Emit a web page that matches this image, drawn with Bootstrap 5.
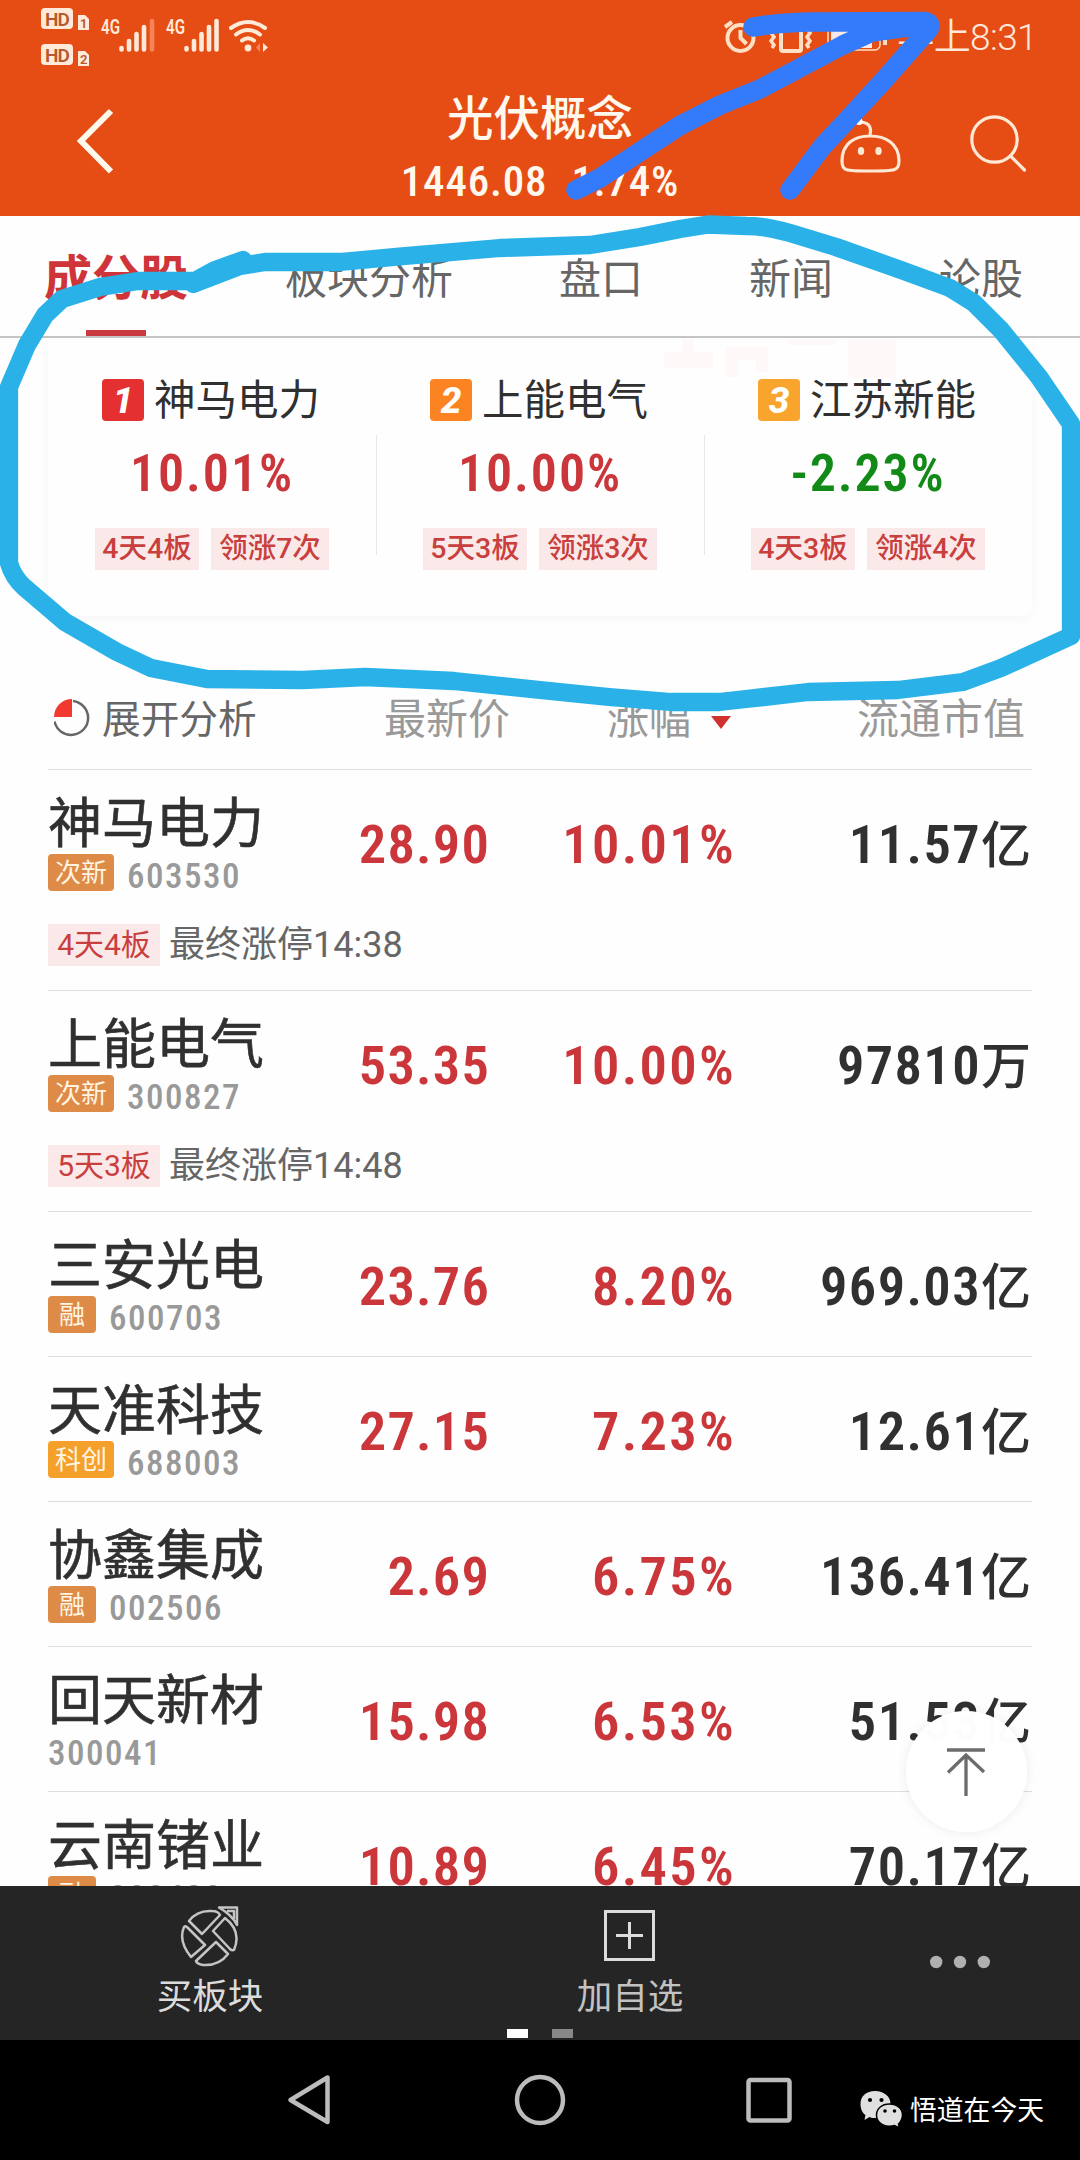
<!DOCTYPE html>
<html lang="zh-CN">
<head>
<meta charset="utf-8">
<meta name="viewport" content="width=1080">
<title>光伏概念</title>
<link href="https://cdn.jsdelivr.net/npm/bootstrap@5.3.0/dist/css/bootstrap.min.css" rel="stylesheet">
<style>
  body { width: 1080px; height: 2160px; overflow: hidden; background: #fefefe; color: #303030;
    font-family: Roboto, "Noto Sans CJK SC", sans-serif; line-height: 1; }
  svg { display: block; flex: none; }
  .screen { width: 1080px; height: 2160px; overflow: hidden; }
  .app-head { height: 216px; background: #e64d14; color: #fff8ee; }
  .status { height: 66px; padding: 0 43px 0 41px; }
  .clock { font-size: 37px; font-weight: 350; color: #ffe9dc; letter-spacing: -.6px; padding-top: 19px; }
  .title-bar { height: 150px; padding: 0 52px 0 74px; }
  .title-mid { font-size: 46.5px; font-weight: 500; padding-top: 30px; }
  .num { font-stretch: 83%; font-weight: 560; letter-spacing: 1.9px; }
  .index-line { font-size: 43px; margin-top: 17px; font-weight: 500; letter-spacing: .8px; }
  .tabs { height: 122px; border-bottom: 2px solid #c4c4c4; color: #666; font-size: 42px; padding: 0 0 0 44px; gap: 106px; }
  .tabs > div { padding-top: 43px; }
  .tabs .on { color: #cf3438; font-weight: 700; font-size: 48px; padding-top: 39px; margin-right: -9px; position: relative; }
  .tabs .on::after { content: ""; position: absolute; left: 42px; bottom: 0; width: 60px; height: 6px; background: #c83a40; }
  .leaders { margin: 0 48px; height: 278px; border-radius: 0 0 10px 10px; box-shadow: 0 3px 12px rgba(0,0,0,.035); clip-path: inset(0 -20px -20px -20px); }
  .leader { width: 328px; padding-top: 41px; position: relative; }
  .leader + .leader::before { content: ""; position: absolute; left: 0; top: 97px; width: 1px; height: 120px; background: #e8e8e8; }
  .rank { width: 42px; height: 42px; border-radius: 4px; color: #fff; font-weight: 800; font-style: italic; font-size: 37px; }
  .r1 { background: #e53031; } .r2 { background: #fb8321; } .r3 { background: #f8a42d; }
  .leader-name { font-size: 41.5px; padding-top: 2px; }
  .leader-head { gap: 10px; height: 42px; margin-left: -2px; }
  .leader-pct { font-size: 52px; margin-top: 27px; height: 52px; }
  .tags { gap: 12px; margin-top: 28px; }
  .tags .pill { justify-content: center; width: 104px; }
  .tags .pill + .pill { width: 118px; }
  .up { color: #cb363a; } .down { color: #128a17; }
  .pill { height: 42px; background: #fbe9ea; color: #c93f3d; font-size: 28.5px; font-weight: 500; white-space: nowrap; }
  .cols { display: grid; grid-template-columns: 212px 229px 243px 300px; margin: 0 48px; }
  .list-area { height: 1270px; flex: none; overflow: hidden; }
  .list-head { height: 154px; color: #999; font-size: 42px; padding-top: 83px; border-bottom: 1px solid #dedede; }
  .list-head .expand { color: #666; font-size: 38.7px; padding-left: 6px; white-space: nowrap; }
  .expand span { padding-top: 2px; }
  .h-price { margin-right: -21px; }
  .h-rise { gap: 20px; height: 42px; padding-right: 1px; }
  .h-cap { padding-right: 7px; }
  .sort { width: 0; height: 0; border: 10px solid transparent; border-top: 13px solid #d0332f; border-bottom: 0; margin-top: 5px; }
  .stock { height: 145px; border-bottom: 1px solid #dedede; margin: 0 48px; }
  .stock.tall { height: 221px; }
  .stock .cols { margin: 0; }
  .stock-name { font-size: 54px; padding-top: 28px; height: 84px; white-space: nowrap; -webkit-text-stroke: .6px #303030; }
  .mk { height: 37px; padding: 0 7px; background: #de8b48; color: #fff5e2; font-size: 26px; border-radius: 4px; }
  .mk.kc { background: #f5a02a; }
  .mk.one { padding: 0 11px; }
  .code { font-size: 35px; color: #999; font-weight: 500; font-stretch: 85%; letter-spacing: 1.5px; margin-left: 13px; padding-top: 5px; height: 37px; }
  .fig { font-size: 54.5px; padding-top: 47px; text-align: right; white-space: nowrap; margin-right: -1px; letter-spacing: 1.2px; }
  .fig + .fig { margin-right: -4px; letter-spacing: 2.3px; }
  .fig.cap { margin-right: 1px; letter-spacing: 1.4px; }
  .fig .unit { font-size: 50px; font-weight: 500; letter-spacing: 0; }
  .limit { height: 42px; margin-top: 33px; color: #666; font-size: 36px; }
  .limit .pill { width: 112px; font-size: 30px; font-weight: 400; }
  .limit-txt { margin-left: 9px; font-weight: 400; }
  .toolbar-dark { height: 154px; background: #252525; color: #c2c2c2; font-size: 35.5px; position: relative; }
  .tool { width: 420px; padding-top: 19px; gap: 13px; }
  .tool.buy { color: #dcdcdc; }
  .tool.more { width: 240px; padding: 66px 0 0 90px; }
  .dash { position: absolute; top: 143px; left: 507px; width: 21px; height: 9px; }
  .dash.off { left: 552px; background: #888; }
  .sysnav { height: 120px; background: #000; }
  .account { color: #fff; font-size: 26.8px; margin-left: 60px; }
  .account span { margin: 58px 0 0 6px; white-space: nowrap; }
  .over { position: absolute; left: 0; top: 0; pointer-events: none; }
  .to-top { position: absolute; left: 906px; top: 1711px; width: 121px; height: 121px; border-radius: 50%; background: rgba(255,255,255,.99); box-shadow: 0 0 12px rgba(0,0,0,.08); }
</style>
</head>
<body>
<div class="screen position-relative d-flex flex-column">
  <header class="app-head">
    <div class="status d-flex justify-content-between align-items-start">
      <svg width="230" height="66" viewBox="41 0 230 66" font-family="Roboto, sans-serif">
        <g fill="#ffe9d8">
          <rect x="41" y="8" width="32" height="21" rx="4"/><rect x="41" y="44" width="32" height="21" rx="4"/>
          <path d="M78 15h7l4 4v11H78zM78 51h7l4 4v11H78z"/>
          <text x="101" y="34" font-size="20" font-weight="600" textLength="19" lengthAdjust="spacingAndGlyphs">4G</text>
          <text x="166" y="34" font-size="20" font-weight="600" textLength="19" lengthAdjust="spacingAndGlyphs">4G</text>
        </g>
        <g fill="#b5582f" font-weight="600">
          <text x="45" y="25.500" font-size="19" textLength="25">HD</text><text x="45" y="61.500" font-size="19" textLength="25">HD</text>
          <text x="80" y="28" font-size="13">1</text><text x="80" y="64" font-size="13">2</text>
        </g>
        <g stroke="#ffe9d8" stroke-width="4.600" stroke-linecap="round">
          <path d="M121.500 48v1.500M129 41v8.500M136.500 34v15.500M144 27v22.500M186.500 48v1.500M194 41v8.500M201.500 34v15.500M209 27v22.500M216.500 21v28.500"/>
          <path d="M152 21v28.500" stroke="#f6825a"/>
        </g>
        <g fill="none" stroke="#ffe9d8" stroke-width="4" stroke-linecap="round">
          <path d="M231 28q17-12 34 0M236 34.500q12-9 24 0M242 40.500q6-4.500 12 0"/>
        </g>
        <circle cx="248" cy="48" r="3.400" fill="#ffe9d8"/><path d="M263 43v9l5-4.500z" fill="#ffe9d8"/><path d="M260 43v9l-4-4.500z" fill="#f6825a"/>
      </svg>
      <div class="d-flex">
        <svg width="174" height="66" viewBox="722 0 174 66" fill="none" stroke="#ffe0c4" stroke-width="4">
          <circle cx="739.500" cy="38" r="13"/><path d="M739.500 30v8l6 6M724 27l7-5M748 22l7 5"/>
          <rect x="780" y="22" width="20" height="29" rx="2"/>
          <path d="M773 29l-3 4 3 4-3 4 3 4-2 3M806 29l3 4-3 4 3 4-3 4 2 3" stroke-width="3.500"/>
          <rect x="827" y="20" width="52" height="30" rx="5" stroke-width="1.500"/><path d="M884 32v13"/>
          <rect x="830" y="22" width="41" height="26" fill="#fbe9e8" stroke="none"/>
        </svg>
        <span class="clock">早上8:31</span>
      </div>
    </div>
    <div class="title-bar d-flex justify-content-between align-items-start position-relative">
      <svg width="44" height="150" viewBox="74 66 44 150" fill="none" stroke="#fff8ec" stroke-width="6"><path d="M111 111L81 141l30 30.500"/></svg>
      <div class="title-mid text-center position-absolute start-0 w-100">
        <div>光伏概念</div>
        <div class="num index-line"><span>1446.08</span><span class="ms-4">1.74%</span></div>
      </div>
      <svg width="190" height="150" viewBox="838 66 190 150" fill="none" stroke="#ffe9d5" stroke-width="3.200" stroke-linecap="round">
        <path d="M870 136c15 0 29 7 29 25 0 10-4 10-29 10s-28 0-28-10c0-18 13-25 28-25zM870 135c2-9-2-13-11-13"/>
        <ellipse cx="861" cy="151" rx="3.200" ry="4" fill="#ffe9d5" stroke="none"/><ellipse cx="878.500" cy="151" rx="3.200" ry="4" fill="#ffe9d5" stroke="none"/><circle cx="859" cy="121.500" r="3.600" fill="#fff" stroke="none"/>
        <circle cx="994.500" cy="139.500" r="22.700"/><path d="M1010.500 156l14 14"/>
      </svg>
    </div>
  </header>

  <nav class="tabs d-flex">
    <div class="on">成分股</div><div>板块分析</div><div>盘口</div><div>新闻</div><div>论股</div>
  </nav>

  <section class="leaders d-flex">
    <div class="leader d-flex flex-column align-items-center">
      <div class="leader-head d-flex align-items-center"><span class="rank r1 d-flex align-items-center justify-content-center">1</span><span class="leader-name">神马电力</span></div>
      <div class="leader-pct num up">10.01%</div>
      <div class="tags d-flex"><span class="pill d-flex align-items-center">4天4板</span><span class="pill d-flex align-items-center">领涨7次</span></div>
    </div>
    <div class="leader d-flex flex-column align-items-center">
      <div class="leader-head d-flex align-items-center"><span class="rank r2 d-flex align-items-center justify-content-center">2</span><span class="leader-name">上能电气</span></div>
      <div class="leader-pct num up">10.00%</div>
      <div class="tags d-flex"><span class="pill d-flex align-items-center">5天3板</span><span class="pill d-flex align-items-center">领涨3次</span></div>
    </div>
    <div class="leader d-flex flex-column align-items-center">
      <div class="leader-head d-flex align-items-center"><span class="rank r3 d-flex align-items-center justify-content-center">3</span><span class="leader-name">江苏新能</span></div>
      <div class="leader-pct num down">-2.23%</div>
      <div class="tags d-flex"><span class="pill d-flex align-items-center">4天3板</span><span class="pill d-flex align-items-center">领涨4次</span></div>
    </div>
  </section>

  <section class="list-area">
    <div class="cols list-head">
      <div class="expand d-flex"><svg class="me-2" width="40" height="40" viewBox="0 0 40 40"><path d="M20 1.500A17 17 0 1 1 1.500 22" fill="none" stroke="#666" stroke-width="2.500" transform="translate(-1 .5)"/><path d="M18 18V0A18 18 0 0 0 0 18z" fill="#f2392f"/></svg><span>展开分析</span></div>
      <div class="text-end"><span class="h-price">最新价</span></div>
      <div class="d-flex justify-content-end align-items-center h-rise"><span>涨幅</span><i class="sort"></i></div>
      <div class="text-end h-cap">流通市值</div>
    </div>
    <div class="stock tall">
      <div class="cols">
        <div><div class="stock-name">神马电力</div><div class="d-flex align-items-center"><span class="mk d-flex align-items-center">次新</span><span class="code">603530</span></div></div>
        <div class="fig num up">28.90</div><div class="fig num up">10.01%</div><div class="fig num cap">11.57<span class="unit">亿</span></div>
      </div>
      <div class="limit d-flex align-items-center"><span class="pill d-flex align-items-center justify-content-center">4天4板</span><span class="limit-txt">最终涨停14:38</span></div>
    </div>
    <div class="stock tall">
      <div class="cols">
        <div><div class="stock-name">上能电气</div><div class="d-flex align-items-center"><span class="mk d-flex align-items-center">次新</span><span class="code">300827</span></div></div>
        <div class="fig num up">53.35</div><div class="fig num up">10.00%</div><div class="fig num cap">97810<span class="unit">万</span></div>
      </div>
      <div class="limit d-flex align-items-center"><span class="pill d-flex align-items-center justify-content-center">5天3板</span><span class="limit-txt">最终涨停14:48</span></div>
    </div>
    <div class="stock">
      <div class="cols">
        <div><div class="stock-name">三安光电</div><div class="d-flex align-items-center"><span class="mk one d-flex align-items-center">融</span><span class="code">600703</span></div></div>
        <div class="fig num up">23.76</div><div class="fig num up">8.20%</div><div class="fig num cap">969.03<span class="unit">亿</span></div>
      </div>
    </div>
    <div class="stock">
      <div class="cols">
        <div><div class="stock-name">天准科技</div><div class="d-flex align-items-center"><span class="mk kc d-flex align-items-center">科创</span><span class="code">688003</span></div></div>
        <div class="fig num up">27.15</div><div class="fig num up">7.23%</div><div class="fig num cap">12.61<span class="unit">亿</span></div>
      </div>
    </div>
    <div class="stock">
      <div class="cols">
        <div><div class="stock-name">协鑫集成</div><div class="d-flex align-items-center"><span class="mk one d-flex align-items-center">融</span><span class="code">002506</span></div></div>
        <div class="fig num up">2.69</div><div class="fig num up">6.75%</div><div class="fig num cap">136.41<span class="unit">亿</span></div>
      </div>
    </div>
    <div class="stock">
      <div class="cols">
        <div><div class="stock-name">回天新材</div><div class="d-flex align-items-center"><span class="code m-0">300041</span></div></div>
        <div class="fig num up">15.98</div><div class="fig num up">6.53%</div><div class="fig num cap">51.53<span class="unit">亿</span></div>
      </div>
    </div>
    <div class="stock">
      <div class="cols">
        <div><div class="stock-name">云南锗业</div><div class="d-flex align-items-center"><span class="mk one d-flex align-items-center">融</span><span class="code">002428</span></div></div>
        <div class="fig num up">10.89</div><div class="fig num up">6.45%</div><div class="fig num cap">70.17<span class="unit">亿</span></div>
      </div>
    </div>
  </section>

  <nav class="toolbar-dark d-flex">
    <div class="tool buy d-flex flex-column align-items-center">
      <svg width="60" height="62" viewBox="180 1905 60 62" fill="none" stroke="#c4c4c4" stroke-width="2.500" stroke-linejoin="round">
        <path d="M189 1925Q197 1914 212 1915Q218 1915 220 1919L202 1938ZM225 1922Q242 1935 234 1954Q232 1955 230 1953L213 1935ZM228 1958Q219 1970 203 1969Q197 1968 196 1965L216 1946ZM191 1961Q178 1945 184 1931Q185 1929 188 1932L205 1949Z" transform="translate(0 -4)"/>
        <path d="M219 1907.500H237V1925Q232 1915 219 1907.500ZM227 1911H234V1919"/>
      </svg>
      <span>买板块</span>
    </div>
    <div class="tool d-flex flex-column align-items-center">
      <svg width="60" height="62" viewBox="600 1905 60 62" fill="none" stroke="#dcdcdc" stroke-width="3"><path d="M605.500 1911.500h48v48h-48zM616 1935.500h27M629.500 1922v27"/></svg>
      <span>加自选</span>
    </div>
    <div class="tool more"><svg width="60" height="20" viewBox="930 1952 60 20" fill="#b0b0b0"><circle cx="936.200" cy="1962" r="6.200"/><circle cx="960" cy="1962" r="6.200"/><circle cx="983.800" cy="1962" r="6.200"/></svg></div>
    <i class="dash bg-white"></i><i class="dash off"></i>
  </nav>

  <footer class="sysnav d-flex">
    <svg width="800" height="120" viewBox="0 2040 800 120" fill="none" stroke="#bcbcbc" stroke-width="4.500" stroke-linejoin="round"><path d="M290.500 2100L327.500 2077.500V2122z"/><circle cx="540" cy="2100" r="23"/><rect x="748.500" y="2080" width="41" height="40.500" rx="2"/></svg>
    <div class="account d-flex align-items-start">
      <svg width="44" height="120" viewBox="860 2040 44 120"><path d="M875 2091c9 0 15.500 5.500 15.500 13 0 8-7 14-15.500 14-2 0-4 0-5.500-1l-5 3 1-5c-3-2-5-6-5-11 0-8 6-13 14.500-13z" fill="#e0e0e0"/><path d="M889.500 2104c8 0 13 5 13 11 0 4-2 7-4 9l1 4-5-2.500c-8 2-18-1-18-10.500 0-6 5-11 13-11z" fill="#e0e0e0" stroke="#000" stroke-width="1.500"/><g fill="#000"><circle cx="870" cy="2100" r="2.100"/><circle cx="881.500" cy="2100" r="2.100"/><circle cx="885" cy="2111" r="1.800"/><circle cx="894.500" cy="2111" r="1.800"/></g></svg>
      <span>悟道在今天</span>
    </div>
  </footer>

  <div class="to-top"><svg width="121" height="121" viewBox="906 1711 121 121" fill="none" stroke="#6c6c6c" stroke-width="3.300"><path d="M947 1750h38M966 1755v41M948 1772.500l18-17.500 18 17"/></svg></div>

  <svg class="over" width="1080" height="2160" viewBox="0 0 1080 2160" fill="none" stroke-linecap="round" stroke-linejoin="round">
    <path d="M664 352h18v-12h12v12h19v16h-49zM726 347h42v25h-12v-12h-18v17h-12zM788 340h48v5h-48zM848 340h48v38h-48z" fill="#fef9f8"/>
    <path d="M576 190L600 178L679 126L720 105L760 89L843 45L872 32L929 24M753 27Q775 23 810 22L925 21.500Q932 23 929 29L884 80L850 117L822 147L790 190" stroke="#347bfb" stroke-width="19.500"/>
    <path d="M193 282L215 270L243 260M193 281L138 281L100 287L62 299L45 315L27 345L9 387V563Q13 577 24 587L65 622L117 652L151 668L207 679L303 680L365 677L454 681L540 690L609 697L671 702H719L746 699L808 692L898 690L963 682L1001 668L1071 636V424L1039 377L1001 330L974 303L950 288L901 270L836 247L790 233Q765 226 747 226L708 224.500L680 229L640 237L590 245L500 248L405 256L340 262H265L240 266L193 284" stroke="#2ab2e8" stroke-width="18.300"/>
  </svg>
</div>
<script src="https://cdn.jsdelivr.net/npm/bootstrap@5.3.0/dist/js/bootstrap.bundle.min.js"></script>
</body>
</html>
